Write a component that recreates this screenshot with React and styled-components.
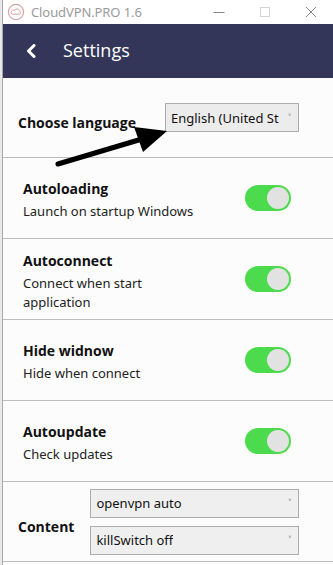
import React from 'react'
import styled, { createGlobalStyle } from 'styled-components'

const Global = createGlobalStyle`
  html, body { margin: 0; padding: 0; background: #e9e9e9; }
  body { font-family: "Open Sans", "Noto Sans", sans-serif; color: #111; }
`

const rows = [
  { title: 'Autoloading', sub: 'Launch on startup Windows' },
  { title: 'Autoconnect', sub: 'Connect when start application' },
  { title: 'Hide widnow', sub: 'Hide when connect' },
  { title: 'Autoupdate', sub: 'Check updates' },
]

function App() {
  return (
    <>
      <Global />
      <Page>
        <Window>
          <TitleBar>
            <AppIcon viewBox='0 0 18 18'>
              <circle cx='9' cy='9' r='7.6' fill='none' stroke='#d9a3a3' strokeWidth='1.2' />
              <path d='M5.3 11.2h7.2a1.7 1.7 0 0 0 -0.3 -3.3a2.5 2.5 0 0 0 -4.7 -0.6a1.9 1.9 0 0 0 -2.2 3.9z' fill='none' stroke='#d9a3a3' strokeWidth='1' />
            </AppIcon>
            <AppName>CloudVPN.PRO 1.6</AppName>
            <Controls>
              <Ctl>
                <svg width='12' height='12' viewBox='0 0 12 12'><path d='M0.5 6.5h11' stroke='#888' strokeWidth='1' /></svg>
              </Ctl>
              <Ctl>
                <svg width='12' height='12' viewBox='0 0 12 12'><rect x='1.5' y='1.5' width='9' height='9' fill='none' stroke='#d4d4d4' strokeWidth='1' /></svg>
              </Ctl>
              <Ctl>
                <svg width='12' height='12' viewBox='0 0 12 12'><path d='M1 1l10 10M11 1l-10 10' stroke='#888' strokeWidth='1' /></svg>
              </Ctl>
            </Controls>
          </TitleBar>

          <Header>
            <Back viewBox='0 0 12 14'>
              <path d='M9 1.5L3.5 7L9 12.5' fill='none' stroke='#fff' strokeWidth='3' strokeLinecap='round' strokeLinejoin='round' />
            </Back>
            <HeaderTitle>Settings</HeaderTitle>
          </Header>

          <LangRow>
            <Label>Choose language</Label>
            <Select $w={134} $bg='#ececec'>
              <SelectText $max={108}>English (United States)</SelectText>
              <Caret>˅</Caret>
            </Select>
            <Arrow viewBox='0 0 333 80'>
              <path d='M58 86L142 61' stroke='#000' strokeWidth='5' strokeLinecap='round' />
              <polygon points='134,49 143,74 167,53' fill='#000' />
            </Arrow>
          </LangRow>

          {rows.map((r) => (
            <ToggleRow key={r.title}>
              <Texts>
                <RowTitle>{r.title}</RowTitle>
                <RowSub>{r.sub}</RowSub>
              </Texts>
              <Toggle $on>
                <Knob />
              </Toggle>
            </ToggleRow>
          ))}

          <ContentRow>
            <Label>Content</Label>
            <Stack>
              <Select $w={209} $bg='#efefef'>
                <SelectText $max={180}>openvpn auto</SelectText>
                <Caret>˅</Caret>
              </Select>
              <Select $w={209} $bg='#efefef'>
                <SelectText $max={180}>killSwitch off</SelectText>
                <Caret>˅</Caret>
              </Select>
            </Stack>
          </ContentRow>
        </Window>
      </Page>
    </>
  )
}

export default App

const Page = styled.div`
  width: 333px;
  height: 565px;
  overflow: hidden;
  padding-left: 2px;
  box-sizing: border-box;
`

const Window = styled.div`
  background: #fcfcfc;
  border-left: 1px solid #a8a8a8;
  height: 565px;
  display: flex;
  flex-direction: column;
`

const TitleBar = styled.div`
  height: 24px;
  background: #fff;
  display: flex;
  align-items: center;
  padding-left: 4px;
`

const AppIcon = styled.svg`
  width: 18px;
  height: 18px;
`

const AppName = styled.div`
  margin-left: 6px;
  font-size: 13px;
  color: #9a9a9a;
  font-family: "Noto Sans", sans-serif;
  letter-spacing: -0.1px;
`

const Controls = styled.div`
  margin-left: auto;
  display: flex;
  align-items: center;
  gap: 34px;
  padding-right: 16px;
`

const Ctl = styled.div`
  display: flex;
  width: 12px;
  height: 12px;
`

const Header = styled.div`
  height: 54px;
  background: #333658;
  display: flex;
  align-items: center;
  padding-left: 22px;
`

const Back = styled.svg`
  width: 12px;
  height: 14px;
`

const HeaderTitle = styled.div`
  margin-left: 26px;
  font-size: 18px;
  color: #fff;
  margin-top: -2px;
`

const Row = styled.div`
  border-bottom: 1px solid #bdbdbd;
  box-sizing: border-box;
  display: flex;
  align-items: center;
`

const LangRow = styled(Row)`
  position: relative;
  height: 80px;
  padding: 25px 34px 0 15px;
  align-items: flex-start;

  & > div:nth-child(2) {
    margin-left: auto;
  }
`

const Label = styled.div`
  font-weight: 700;
  font-size: 14px;
  white-space: nowrap;
  padding-top: 10px;
`

const Select = styled.div`
  width: ${(p) => p.$w}px;
  height: 29px;
  box-sizing: border-box;
  border: 1px solid #adadad;
  background: ${(p) => p.$bg};
  display: flex;
  align-items: center;
  padding: 0 7px 0 5px;
  font-size: 13px;
`

const SelectText = styled.span`
  max-width: ${(p) => p.$max}px;
  overflow: hidden;
  white-space: nowrap;
  font-family: "Noto Sans", sans-serif;
`

const Caret = styled.span`
  margin-left: auto;
  font-size: 10px;
  color: #555;
`

const Arrow = styled.svg`
  position: absolute;
  left: -3px;
  top: 0;
  width: 333px;
  height: 80px;
  overflow: visible;
  pointer-events: none;
`

const ToggleRow = styled(Row)`
  height: 81px;
  padding: 0 42px 0 20px;
  justify-content: space-between;
`

const Texts = styled.div`
  display: flex;
  flex-direction: column;
  gap: 4px;
  max-width: 182px;
  margin-top: 4px;
`

const RowTitle = styled.div`
  font-weight: 700;
  font-size: 14px;
`

const RowSub = styled.div`
  font-size: 13px;
  font-family: "Noto Sans", sans-serif;
  color: #222;
  line-height: 19px;
`

const Toggle = styled.div`
  width: 46px;
  height: 26px;
  border-radius: 13px;
  background: ${(p) => (p.$on ? '#4cdb4c' : '#ccc')};
  display: flex;
  align-items: center;
  justify-content: ${(p) => (p.$on ? 'flex-end' : 'flex-start')};
  padding: 0 2px;
  box-sizing: border-box;
  flex-shrink: 0;
`

const Knob = styled.div`
  width: 22px;
  height: 22px;
  border-radius: 50%;
  background: #e2e2e2;
`

const ContentRow = styled(Row)`
  height: 80px;
  padding: 0 0 0 15px;
  gap: 16px;
`

const Stack = styled.div`
  display: flex;
  flex-direction: column;
  gap: 8px;
`
